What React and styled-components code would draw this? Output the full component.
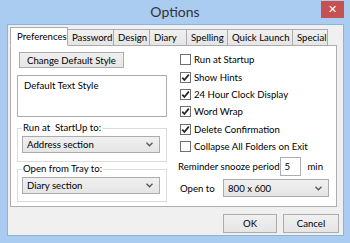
import React from "react";
import styled, { createGlobalStyle } from "styled-components";

const GlobalStyle = createGlobalStyle`
  html, body {
    margin: 0;
    padding: 0;
    background: #a9ccf0;
  }
  * {
    box-sizing: border-box;
  }
`;

const Window = styled.div`
  width: 350px;
  height: 243px;
  display: flex;
  flex-direction: column;
  background: #a9ccf0;
  font-family: Lato, "Liberation Sans", sans-serif;
  font-size: 9.6px;
  color: #000;
`;

const TitleBar = styled.div`
  height: 24px;
  display: grid;
  grid-template-columns: 1fr auto 1fr;
  align-items: start;
`;

const Title = styled.div`
  grid-column: 2;
  padding-top: 3px;
  font-size: 14px;
  color: #333;
`;

const CloseButton = styled.div`
  grid-column: 3;
  justify-self: end;
  width: 23px;
  height: 17px;
  margin: 1px 6px 0 0;
  background: #c75050;
  color: #fff;
  font-family: "DejaVu Sans", sans-serif;
  font-size: 11px;
  font-weight: bold;
  display: flex;
  align-items: center;
  justify-content: center;
`;

const Client = styled.div`
  flex: 1;
  margin: 0 6px 7px 7px;
  border: 1px solid #8eb2d8;
  background: #f0f0f0;
  display: flex;
  flex-direction: column;
`;

const TabStrip = styled.div`
  display: flex;
  align-items: flex-end;
  margin: 2px 0 -1px 2px;
  position: relative;
  z-index: 1;
`;

const Tab = styled.div`
  width: ${(p) => p.$w}px;
  height: ${(p) => (p.$active ? 19 : 17)}px;
  padding: ${(p) => (p.$active ? "3px 0 0 6px" : "2px 0 0 4px")};
  border: 1px solid #acacac;
  border-left-width: ${(p) => (p.$active ? 1 : 0)}px;
  border-bottom-color: ${(p) => (p.$active ? "#fff" : "#acacac")};
  background: ${(p) =>
    p.$active ? "#fff" : "linear-gradient(#f0f0f0, #e5e5e5)"};
  white-space: nowrap;
`;

const Panel = styled.div`
  height: 162px;
  margin: 0 6px 0 2px;
  border: 1px solid #adadad;
  background: #fff;
  display: grid;
  grid-template-columns: 150px 1fr;
  column-gap: 11px;
  padding: 0 6px;
`;

const LeftCol = styled.div`
  display: flex;
  flex-direction: column;
  padding-top: 6px;
`;

const RightCol = styled.div`
  display: flex;
  flex-direction: column;
  padding-top: 5px;
  min-width: 0;
`;

const PushButton = styled.div`
  width: ${(p) => p.$w}px;
  height: ${(p) => p.$h || 19}px;
  margin-left: ${(p) => p.$ml || 0}px;
  border: 1px solid #acacac;
  background: linear-gradient(#f0f0f0, #e5e5e5);
  display: flex;
  align-items: center;
  justify-content: center;
  white-space: nowrap;
`;

const TextBox = styled.div`
  height: 42px;
  margin-top: 7px;
  border: 1px solid #abadb3;
  padding: 4px 6px;
`;

const Group = styled.fieldset`
  margin: ${(p) => p.$mt}px 0 0 0;
  padding: 0 6px ${(p) => p.$pb}px 4px;
  border: 1px solid #dcdcdc;
  min-width: 0;
`;

const Legend = styled.legend`
  padding: 0 1px;
  margin-left: 0;
  line-height: 12px;
`;

const Select = styled.div`
  height: ${(p) => p.$h || 17}px;
  width: ${(p) => (p.$w ? `${p.$w}px` : "auto")};
  margin: ${(p) => p.$mt || 0}px ${(p) => (p.$w ? 1 : 0)}px 0
    ${(p) => (p.$w ? "auto" : 0)};
  border: 1px solid #acacac;
  background: linear-gradient(#f0f0f0, #e5e5e5);
  display: flex;
  align-items: center;
  justify-content: space-between;
  padding: 0 6px 0 4px;
  white-space: nowrap;
`;

const Row = styled.div`
  height: ${(p) => p.$h}px;
  display: flex;
  align-items: center;
  white-space: nowrap;
  margin-top: ${(p) => p.$mt || 0}px;
`;

const Box = styled.span`
  width: 11px;
  height: 11px;
  margin: 0 3px 0 2px;
  border: 1px solid #707070;
  background: #fff;
  display: flex;
  align-items: center;
  justify-content: center;
`;

const Input = styled.div`
  width: 26px;
  height: 19px;
  margin-left: auto;
  border: 1px solid #abadb3;
  background: #fff;
  padding-left: 4px;
  display: flex;
  align-items: center;
`;

const Unit = styled.span`
  margin: 0 7px 0 6px;
`;

const Label = styled.span`
  padding-left: ${(p) => p.$pl || 0}px;
`;

const Footer = styled.div`
  display: flex;
  justify-content: flex-end;
  gap: 6px;
  padding: 7px 4px 0 0;
`;

const Chevron = () => (
  <svg width="7" height="5" viewBox="0 0 7 5">
    <path d="M0.5 0.8 L3.5 3.8 L6.5 0.8" fill="none" stroke="#555" strokeWidth="1.3" />
  </svg>
);

const Check = () => (
  <svg width="9" height="9" viewBox="0 0 9 9">
    <path d="M1.3 4.6 L3.4 7 L7.8 1.6" fill="none" stroke="#222" strokeWidth="1.7" />
  </svg>
);

const tabs = [
  { name: "Preferences", w: 58, active: true },
  { name: "Password", w: 46 },
  { name: "Design", w: 36 },
  { name: "Diary", w: 37 },
  { name: "Spelling", w: 41 },
  { name: "Quick Launch", w: 65 },
  { name: "Special", w: 35 },
];

const options = [
  { label: "Run at Startup", checked: false },
  { label: "Show Hints", checked: true },
  { label: "24 Hour Clock Display", checked: true },
  { label: "Word Wrap", checked: true },
  { label: "Delete Confirmation", checked: true },
  { label: "Collapse All Folders on Exit", checked: false },
];

export default function App() {
  return (
    <>
      <GlobalStyle />
      <Window>
        <TitleBar>
          <Title>Options</Title>
          <CloseButton>✕</CloseButton>
        </TitleBar>
        <Client>
          <TabStrip>
            {tabs.map((t) => (
              <Tab key={t.name} $w={t.w} $active={t.active}>
                {t.name}
              </Tab>
            ))}
          </TabStrip>
          <Panel>
            <LeftCol>
              <PushButton $w={105} $h={16} $ml={2}>
                Change Default Style
              </PushButton>
              <TextBox>Default Text Style</TextBox>
              <Group $mt={5} $pb={8}>
                <Legend>Run at&nbsp; StartUp to:</Legend>
                <Select $mt={2}>
                  Address section
                  <Chevron />
                </Select>
              </Group>
              <Group $mt={1} $pb={7}>
                <Legend>Open from Tray to:</Legend>
                <Select $mt={2}>
                  Diary section
                  <Chevron />
                </Select>
              </Group>
            </LeftCol>
            <RightCol>
              {options.map((o) => (
                <Row key={o.label} $h={17.4}>
                  <Box>{o.checked && <Check />}</Box>
                  {o.label}
                </Row>
              ))}
              <Row $h={20} $mt={1}>
                Reminder snooze period
                <Input>5</Input>
                <Unit>min</Unit>
              </Row>
              <Row $h={18} $mt={3}>
                <Label $pl={2}>Open to</Label>
                <Select $w={106} $h={18}>
                  800 x 600
                  <Chevron />
                </Select>
              </Row>
            </RightCol>
          </Panel>
          <Footer>
            <PushButton $w={54}>OK</PushButton>
            <PushButton $w={56}>Cancel</PushButton>
          </Footer>
        </Client>
      </Window>
    </>
  );
}
